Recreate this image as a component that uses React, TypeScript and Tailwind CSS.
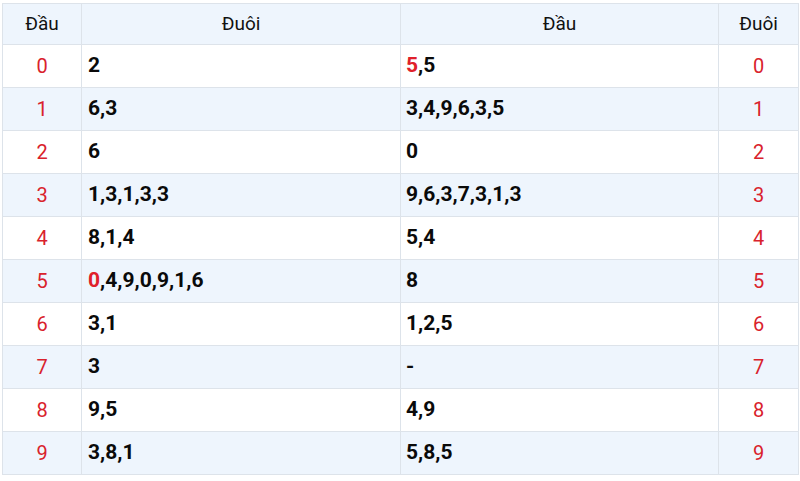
import React from 'react';

interface Row {
  dau: number;
  duoi: string[];
  dau2: string[];
  hot1?: number;
  hot2?: number;
}

const rows: Row[] = [
  { dau: 0, duoi: ['2'], dau2: ['5', '5'], hot2: 0 },
  { dau: 1, duoi: ['6', '3'], dau2: ['3', '4', '9', '6', '3', '5'] },
  { dau: 2, duoi: ['6'], dau2: ['0'] },
  { dau: 3, duoi: ['1', '3', '1', '3', '3'], dau2: ['9', '6', '3', '7', '3', '1', '3'] },
  { dau: 4, duoi: ['8', '1', '4'], dau2: ['5', '4'] },
  { dau: 5, duoi: ['0', '4', '9', '0', '9', '1', '6'], dau2: ['8'], hot1: 0 },
  { dau: 6, duoi: ['3', '1'], dau2: ['1', '2', '5'] },
  { dau: 7, duoi: ['3'], dau2: ['-'] },
  { dau: 8, duoi: ['9', '5'], dau2: ['4', '9'] },
  { dau: 9, duoi: ['3', '8', '1'], dau2: ['5', '8', '5'] },
];

function Nums({ list, hot }: { list: string[]; hot?: number }) {
  return (
    <>
      {list.map((n, i) => (
        <React.Fragment key={i}>
          {i > 0 && ','}
          <span className={i === hot ? 'text-[#e0202a]' : ''}>{n}</span>
        </React.Fragment>
      ))}
    </>
  );
}

export default function App() {
  return (
    <div className="w-[800px] h-[481px] bg-white pt-[3px] pl-[2px] font-['Roboto',sans-serif]">
      <table className="w-[796px] border-collapse table-fixed">
        <colgroup>
          <col className="w-[79px]" />
          <col className="w-[319px]" />
          <col className="w-[318px]" />
          <col className="w-[80px]" />
        </colgroup>
        <thead>
          <tr className="h-[41px] bg-[#eef5fd] text-[19px] text-[#111]">
            <th className="border border-[#dde3ea] font-normal">Đầu</th>
            <th className="border border-[#dde3ea] font-normal">Đuôi</th>
            <th className="border border-[#dde3ea] font-normal">Đầu</th>
            <th className="border border-[#dde3ea] font-normal">Đuôi</th>
          </tr>
        </thead>
        <tbody>
          {rows.map((r) => (
            <tr key={r.dau} className={`h-[43px] ${r.dau % 2 === 1 ? 'bg-[#eef5fd]' : 'bg-white'}`}>
              <td className="border border-[#dde3ea] text-center text-[20px] text-[#d9222c]">{r.dau}</td>
              <td className="border border-[#dde3ea] pl-[6px] text-[21px] font-bold text-[#0a0a0a]">
                <Nums list={r.duoi} hot={r.hot1} />
              </td>
              <td className="border border-[#dde3ea] pl-[5px] text-[21px] font-bold text-[#0a0a0a]">
                <Nums list={r.dau2} hot={r.hot2} />
              </td>
              <td className="border border-[#dde3ea] text-center text-[20px] text-[#d9222c]">{r.dau}</td>
            </tr>
          ))}
        </tbody>
      </table>
    </div>
  );
}
